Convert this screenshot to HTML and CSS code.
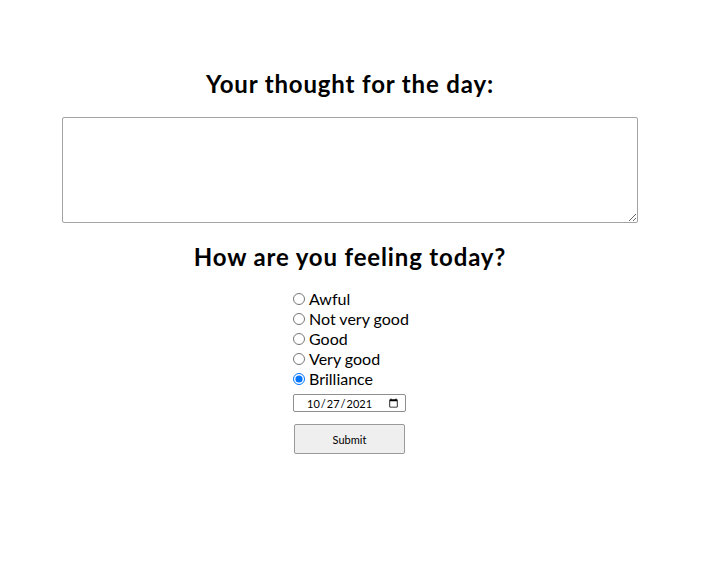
FILE: index.html
```html
<!DOCTYPE html>
<html>
<head>
<meta charset="utf-8">
<link rel="stylesheet" href="styles.css">
</head>
<body>
<main class="page">
  <h1 class="title">Your thought for the day:</h1>
  <textarea class="thought"></textarea>
  <h2 class="title title-second">How are you feeling today?</h2>
  <form class="feelings">
    <label class="option"><input type="radio" name="feel" class="radio"> Awful</label>
    <label class="option"><input type="radio" name="feel" class="radio"> Not very good</label>
    <label class="option"><input type="radio" name="feel" class="radio"> Good</label>
    <label class="option"><input type="radio" name="feel" class="radio"> Very good</label>
    <label class="option"><input type="radio" name="feel" class="radio" checked> Brilliance</label>
    <input type="date" class="date" value="2021-10-27">
    <button type="button" class="submit">Submit</button>
  </form>
</main>
</body>
</html>
```
FILE: styles.css
```css
html, body {
  margin: 0;
  padding: 0;
  background: #fff;
}
body {
  font-family: "Lato", "Noto Sans", sans-serif;
  color: #000;
}
.page {
  width: 700px;
  padding-top: 70px;
  display: flex;
  flex-direction: column;
  align-items: center;
}
.title {
  margin: 0;
  font-size: 24px;
  line-height: 28px;
  font-weight: 700;
  letter-spacing: 0.85px;
  text-align: center;
}
.thought {
  box-sizing: border-box;
  width: 576px;
  height: 106px;
  margin: 19px 0 0 0;
  display: block;
  border: 1px solid #a3a3a3;
  border-radius: 2px;
}
.title-second {
  margin-top: 20px;
}
.feelings {
  width: 114px;
  margin-top: 18px;
  display: flex;
  flex-direction: column;
  align-items: flex-start;
}
.option {
  display: flex;
  align-items: center;
  height: 20px;
  font-size: 16px;
  line-height: 20px;
  white-space: nowrap;
}
.radio {
  width: 12px;
  height: 12px;
  margin: 0 4px 0 0;
}
.date {
  box-sizing: border-box;
  width: 113px;
  height: 18px;
  margin: 5px 0 0 0;
  font-family: "Lato", sans-serif;
  font-size: 11px;
  padding: 0 4px 0 12px;
  border: 1px solid #8f8f8f;
  border-radius: 2px;
}
.submit {
  box-sizing: border-box;
  width: 111px;
  height: 30px;
  margin: 12px 0 0 1px;
  font-family: "Lato", sans-serif;
  font-size: 11px;
  color: #000;
  background: #efefef;
  border: 1px solid #9a9a9a;
  border-radius: 2px;
}
```
